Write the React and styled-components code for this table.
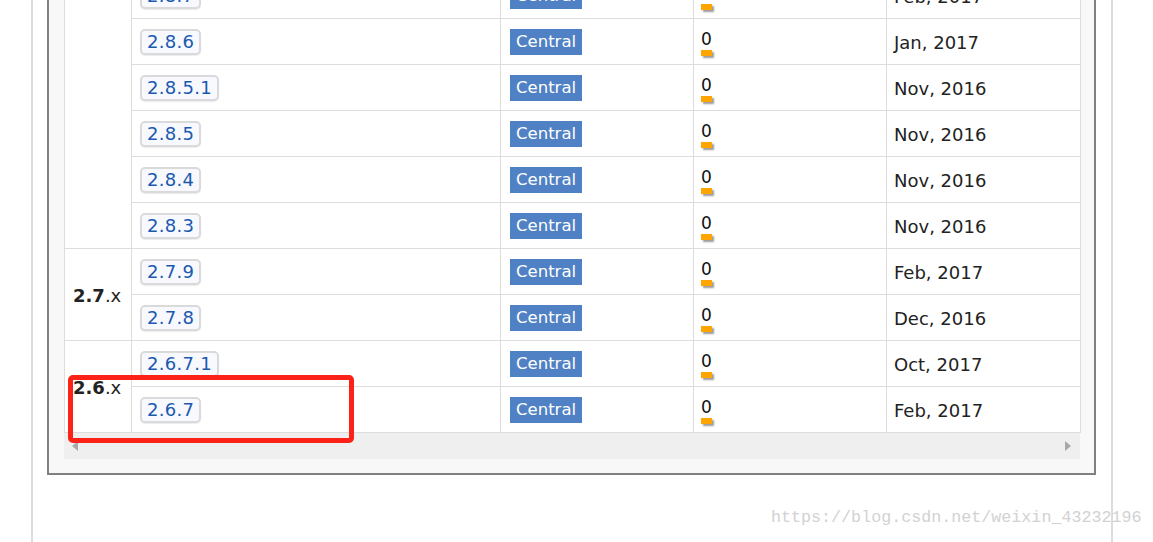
import React from "react";
import styled, { createGlobalStyle } from "styled-components";

const GlobalStyle = createGlobalStyle`
  html, body {
    margin: 0;
    padding: 0;
    background: #fff;
    overflow: hidden;
  }
`;

const groups = [
  {
    name: ["2.8", ".x"],
    rows: [
      ["2.8.11.1", "Dec, 2017"],
      ["2.8.11", "Dec, 2017"],
      ["2.8.10", "Aug, 2017"],
      ["2.8.9", "Jun, 2017"],
      ["2.8.8.1", "Apr, 2017"],
      ["2.8.8", "Apr, 2017"],
      ["2.8.7", "Feb, 2017"],
      ["2.8.6", "Jan, 2017"],
      ["2.8.5.1", "Nov, 2016"],
      ["2.8.5", "Nov, 2016"],
      ["2.8.4", "Nov, 2016"],
      ["2.8.3", "Nov, 2016"],
    ],
  },
  {
    name: ["2.7", ".x"],
    rows: [
      ["2.7.9", "Feb, 2017"],
      ["2.7.8", "Dec, 2016"],
    ],
  },
  {
    name: ["2.6", ".x"],
    rows: [
      ["2.6.7.1", "Oct, 2017"],
      ["2.6.7", "Feb, 2017"],
    ],
  },
];

const font = `"DejaVu Sans", Verdana, sans-serif`;

const Page = styled.div`
  position: relative;
  width: 1153px;
  height: 542px;
  overflow: hidden;
  font-family: ${font};
`;

// the page is scrolled: the top of the version list sits above the window
const Column = styled.div`
  box-sizing: border-box;
  margin: -321px 0 0 31px;
  width: 1082px;
  min-height: 900px;
  padding: 0 15px 0 14px;
  border-left: 2px solid #dcdcdc;
  border-right: 2px solid #dcdcdc;
`;

const Panel = styled.div`
  border: 2px solid #808080;
  background: #f8f8f8;
  padding: 15px 14px 14px 15px;
`;

const Table = styled.table`
  width: 1016px;
  table-layout: fixed;
  border-collapse: collapse;
  background: #fff;
  td {
    height: 44px;
    border: 1px solid #dddddd;
    padding: 1px 8px 0;
    vertical-align: middle;
    color: #222;
  }
`;

const GroupCell = styled.td`
  font-size: 18px;
  white-space: nowrap;
  b {
    font-weight: bold;
  }
`;

const VersionBadge = styled.a`
  display: inline-block;
  height: 22px;
  line-height: 22px;
  padding: 0 5px;
  border: 2px solid #dadada;
  border-radius: 5px;
  background: #f8f8ff;
  box-shadow: 0 1px 1px rgba(0, 0, 0, 0.08);
  color: #1a5aae;
  font-size: 18px;
  letter-spacing: 0.3px;
  text-decoration: none;
`;

const RepoCell = styled.td`
  && {
    padding-left: 9px;
  }
`;

const RepoTag = styled.span`
  display: inline-block;
  height: 26px;
  line-height: 26px;
  padding: 0 6px;
  background: #5081c4;
  color: #fff;
  font-size: 16.5px;
`;

const UsageCell = styled.td`
  && {
    padding-left: 7px;
  }
`;

const UsageBox = styled.div`
  display: flex;
  flex-direction: column;
  align-items: flex-start;
  margin-top: 1px;
  font-size: 17px;
  line-height: 18px;
  color: #111;
`;

const UsageBar = styled.span`
  display: block;
  width: 11px;
  height: 6px;
  margin-top: 2px;
  background: #ffa500;
  box-shadow: 2px 2px 2px #9a9a9a;
`;

const DateCell = styled.td`
  font-size: 18px;
  && {
    padding-left: 7px;
  }
`;

const ScrollBar = styled.div`
  display: flex;
  align-items: center;
  justify-content: space-between;
  height: 26px;
  padding: 0 9px 0 8px;
  background: #efefef;
`;

const Arrow = styled.span`
  width: 0;
  height: 0;
  border-top: 5.5px solid transparent;
  border-bottom: 5.5px solid transparent;
  ${(p) =>
    p.$dir === "left"
      ? "border-right: 6px solid #a8a8a8;"
      : "border-left: 6px solid #a8a8a8;"}
`;

const Highlight = styled.div`
  position: absolute;
  left: 68px;
  top: 375px;
  width: 286px;
  height: 68px;
  box-sizing: border-box;
  border: 5px solid #fd2217;
  border-radius: 5px;
`;

const Watermark = styled.div`
  position: absolute;
  left: 771px;
  top: 508px;
  font-family: "Liberation Mono", "DejaVu Sans Mono", monospace;
  font-size: 16.7px;
  color: #d2d2d2;
  white-space: nowrap;
`;

export default function App() {
  return (
    <Page>
      <GlobalStyle />
      <Column>
        <Panel>
          <Table>
            <colgroup>
              <col style={{ width: 67 }} />
              <col style={{ width: 369 }} />
              <col style={{ width: 193 }} />
              <col style={{ width: 193 }} />
              <col style={{ width: 194 }} />
            </colgroup>
            <tbody>
              {groups.map((g) =>
                g.rows.map(([version, date], i) => (
                  <tr key={version}>
                    {i === 0 && (
                      <GroupCell rowSpan={g.rows.length}>
                        <b>{g.name[0]}</b>
                        {g.name[1]}
                      </GroupCell>
                    )}
                    <td>
                      <VersionBadge>{version}</VersionBadge>
                    </td>
                    <RepoCell>
                      <RepoTag>Central</RepoTag>
                    </RepoCell>
                    <UsageCell>
                      <UsageBox>
                        0
                        <UsageBar />
                      </UsageBox>
                    </UsageCell>
                    <DateCell>{date}</DateCell>
                  </tr>
                ))
              )}
            </tbody>
          </Table>
          <ScrollBar>
            <Arrow $dir="left" />
            <Arrow $dir="right" />
          </ScrollBar>
        </Panel>
      </Column>
      <Highlight />
      <Watermark>https://blog.csdn.net/weixin_43232196</Watermark>
    </Page>
  );
}
